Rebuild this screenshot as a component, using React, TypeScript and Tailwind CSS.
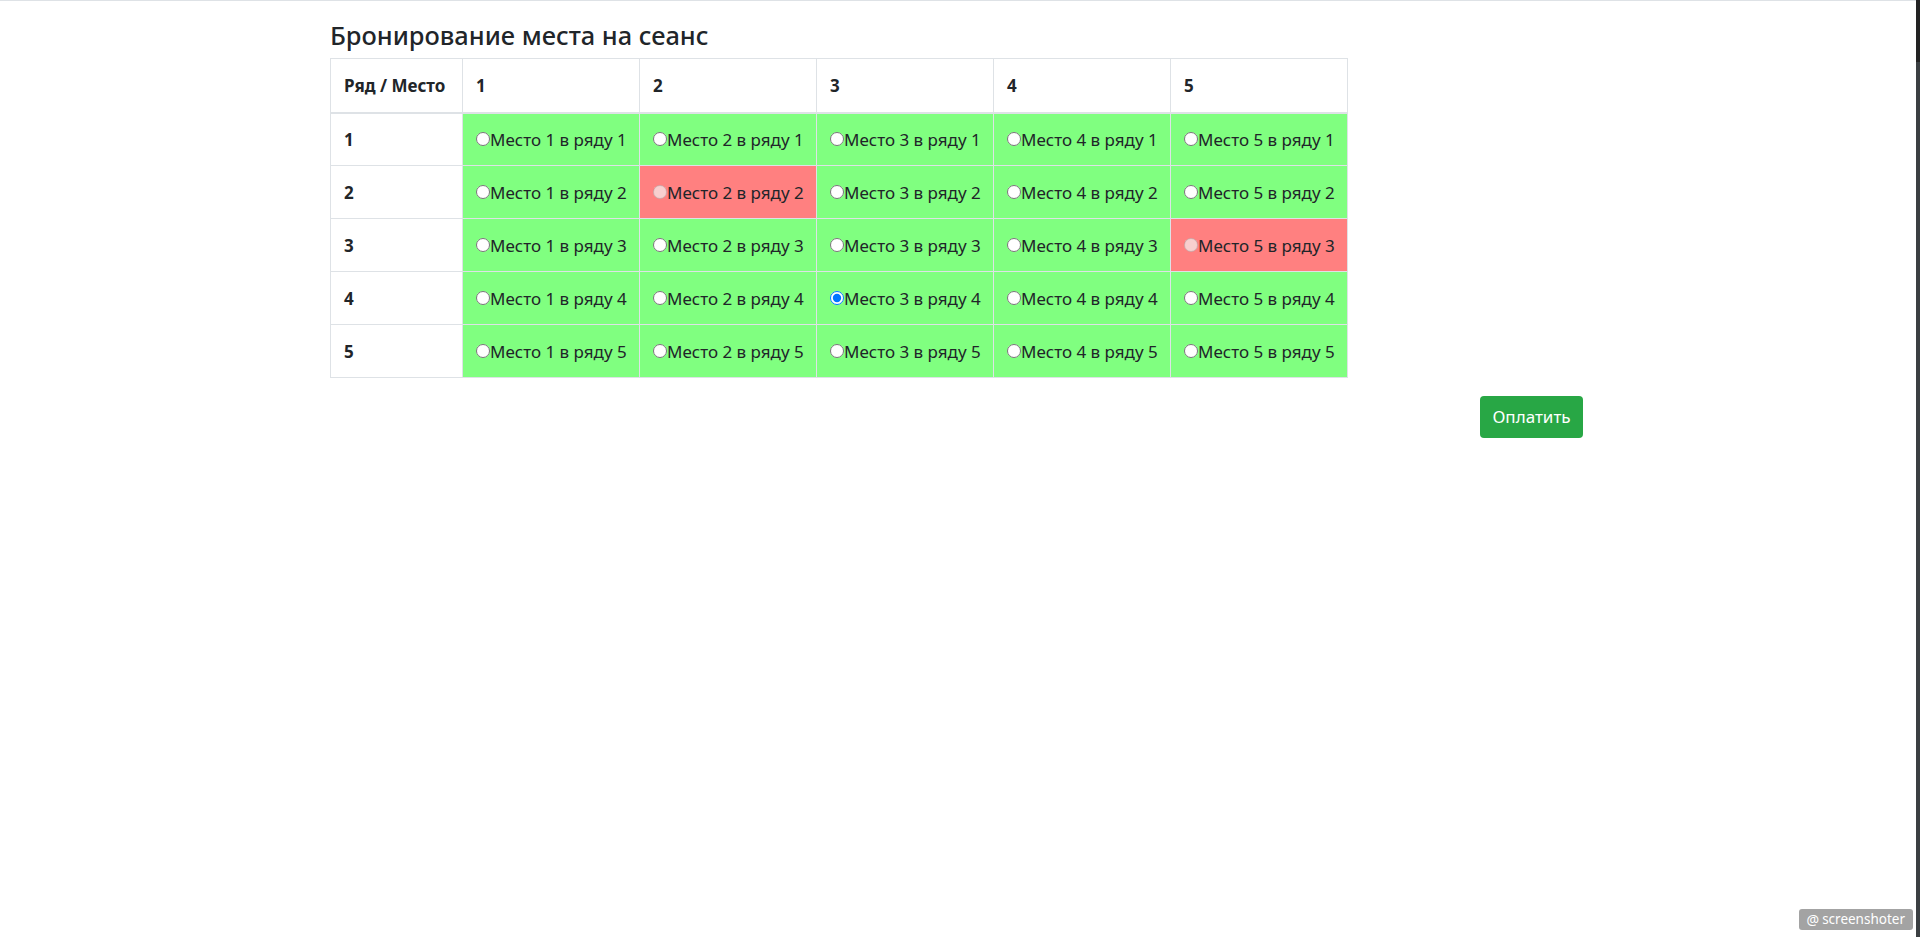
import { useState } from "react";

const seats = [1, 2, 3, 4, 5];
const rows = [1, 2, 3, 4, 5];

// booked seats: "row-seat"
const booked = new Set(["2-2", "3-5"]);

export default function App() {
  const [selected, setSelected] = useState("4-3");

  return (
    <div
      className="flex min-h-[937px] w-full bg-white text-[#212529]"
      style={{ fontFamily: "'Segoe UI', 'Noto Sans', 'Liberation Sans', sans-serif" }}
    >
      <div className="flex-1 border-t border-[#dee2e6]">
        <div className="ml-[330px] w-[1253px] pt-[18px]">
          <h4 className="mb-[7px] text-[25.4px] leading-[32px] font-medium">Бронирование места на сеанс</h4>

          <table className="w-[1017px] table-fixed border-collapse text-[17px] leading-[26px]">
            <colgroup>
              <col className="w-[132px]" />
              {seats.map((s) => (
                <col key={s} className="w-[177px]" />
              ))}
            </colgroup>
            <thead>
              <tr className="h-[54px]">
                <th className="border border-b-2 border-[#dee2e6] px-[13px] pt-[2px] text-left align-middle font-bold">
                  Ряд / Место
                </th>
                {seats.map((s) => (
                  <th
                    key={s}
                    className="border border-b-2 border-[#dee2e6] px-[13px] pt-[2px] text-left align-middle font-bold"
                  >
                    {s}
                  </th>
                ))}
              </tr>
            </thead>
            <tbody>
              {rows.map((r) => (
                <tr key={r} className="h-[53px]">
                  <th className="border border-[#dee2e6] px-[13px] pt-[2px] text-left align-middle font-bold">{r}</th>
                  {seats.map((s) => {
                    const id = `${r}-${s}`;
                    const taken = booked.has(id);
                    return (
                      <td
                        key={s}
                        className={`border border-[#dee2e6] px-[13px] pt-[2px] align-middle whitespace-nowrap ${
                          taken ? "bg-[#ff8080]" : "bg-[#80ff80]"
                        }`}
                      >
                        <label className="inline-flex items-center">
                          <input
                            type="radio"
                            name="seat"
                            className="m-0 mb-[2px] h-[14px] w-[14px]"
                            disabled={taken}
                            checked={selected === id}
                            onChange={() => setSelected(id)}
                          />
                          <span>
                            Место {s} в ряду {r}
                          </span>
                        </label>
                      </td>
                    );
                  })}
                </tr>
              ))}
            </tbody>
          </table>

          <div className="mt-[18px] flex justify-end">
            <button className="h-[42px] w-[103px] rounded-[4px] bg-[#28a745] text-[17px] text-white">
              Оплатить
            </button>
          </div>
        </div>
      </div>

      {/* window edge */}
      <div className="flex w-[4px] flex-col">
        <div className="h-[62px] bg-[#232323]" />
        <div className="flex-1 bg-[#3b3f42]" />
      </div>

      <div className="fixed right-[7px] bottom-[7px] flex h-[21px] items-center gap-[3px] rounded-[3px] bg-[#a3a3a3] px-[8px] text-[13.5px] text-white">
        <span className="text-[14px] leading-none">@</span>
        <span>screenshoter</span>
      </div>
    </div>
  );
}
